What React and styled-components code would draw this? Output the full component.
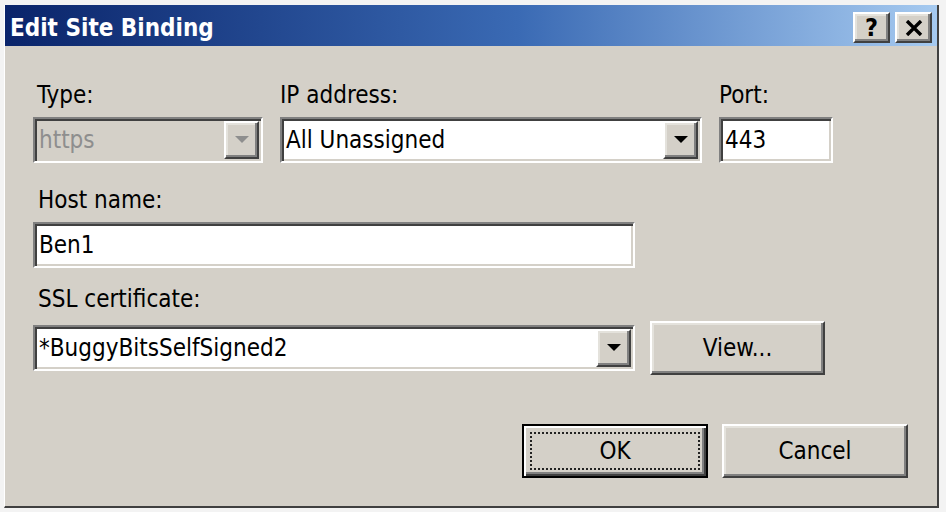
import React from 'react'
import styled, { createGlobalStyle, css } from 'styled-components'

const GlobalStyle = createGlobalStyle`
  html, body {
    margin: 0;
    background: #f3f3f3;
  }
  body {
    font-family: "DejaVu Sans Condensed", "Liberation Sans", sans-serif;
  }
  * {
    box-sizing: border-box;
  }
`

const raised = css`
  border: 2px solid;
  border-color: #ffffff #404040 #404040 #ffffff;
  box-shadow: inset -2px -2px 0 #808080, inset 2px 2px 0 #e4e2dc;
  background: #d4d0c8;
`

const sunken = css`
  border: 2px solid;
  border-color: #808080 #ffffff #ffffff #808080;
  box-shadow: inset 2px 2px 0 #404040, inset -2px -2px 0 #d4d0c8;
  padding: 2px;
`

const Page = styled.div`
  width: 946px;
  height: 512px;
  padding: 5px 0 0 4px;
  overflow: hidden;
`

const Window = styled.div`
  width: 935px;
  height: 503px;
  display: flex;
  flex-direction: column;
  background: #d4d0c8;
  border-style: solid;
  border-width: 0 2px 2px 1px;
  border-color: #ffffff #404040 #404040 #ffffff;
`

const TitleBar = styled.div`
  height: 41px;
  flex: none;
  display: flex;
  align-items: center;
  justify-content: space-between;
  padding: 4px 5px 0 5px;
  background: linear-gradient(to right, #0a246a 0%, #3a6ab4 55%, #a6caf0 100%);
`

const Title = styled.span`
  color: #ffffff;
  font-weight: bold;
  font-size: 24px;
  line-height: 28px;
`

const CaptionButtons = styled.div`
  display: flex;
  gap: 5px;
`

const CaptionButton = styled.div`
  ${raised};
  width: 37px;
  height: 31px;
  display: flex;
  align-items: center;
  justify-content: center;
  font-weight: bold;
  font-size: 25px;
  line-height: 24px;
  color: #000;
`

const Body = styled.div`
  flex: 1;
  display: flex;
  flex-direction: column;
  padding: 35px 29px 0 28px;
`

const TopRow = styled.div`
  display: grid;
  grid-template-columns: 230px 422px 114px;
  column-gap: 17px;
`

const Group = styled.div`
  display: flex;
  flex-direction: column;
  margin-top: ${({ $top }) => $top || 0}px;
`

const Label = styled.div`
  font-size: 24px;
  line-height: 28px;
  color: #000;
  margin-bottom: 8px;
  padding-left: ${({ $indent }) => ($indent === undefined ? 4 : $indent)}px;
`

const Field = styled.div`
  ${sunken};
  width: ${({ $width }) => ($width ? `${$width}px` : '100%')};
  height: 46px;
  display: flex;
  align-items: stretch;
  background: ${({ $disabled }) => ($disabled ? '#d4d0c8' : '#ffffff')};
`

const Value = styled.span`
  flex: 1;
  font-size: 24px;
  line-height: 38px;
  padding-left: 2px;
  color: ${({ $disabled }) => ($disabled ? '#8e8e8e' : '#000')};
  white-space: nowrap;
  overflow: hidden;
`

const DropButton = styled.div`
  ${raised};
  width: 35px;
  display: flex;
  align-items: center;
  justify-content: center;
`

const CertRow = styled.div`
  display: flex;
  align-items: center;
  gap: 15px;
`

const Button = styled.div`
  ${raised};
  width: ${({ $width }) => $width}px;
  height: 54px;
  display: flex;
  align-items: center;
  justify-content: center;
  font-size: 24px;
  color: #000;
  ${({ $default }) =>
    $default &&
    css`
      border: 2px solid #000;
      box-shadow: inset 2px 2px 0 #ffffff, inset -2px -2px 0 #404040,
        inset -4px -4px 0 #808080;
      padding: 6px;
    `}
`

const FocusRing = styled.span`
  flex: 1;
  align-self: stretch;
  display: flex;
  align-items: center;
  justify-content: center;
  border: 2px dotted #222;
`

const ButtonRow = styled.div`
  display: flex;
  justify-content: flex-end;
  gap: 14px;
  margin-top: 49px;
`

const Arrow = ({ disabled }) => (
  <svg width="14" height="8" viewBox="0 0 14 8">
    <polygon points="0,0 14,0 7,7" fill={disabled ? '#8e8e8e' : '#000'} />
  </svg>
)

const Combo = ({ width, value, disabled }) => (
  <Field $width={width} $disabled={disabled}>
    <Value $disabled={disabled}>{value}</Value>
    <DropButton>
      <Arrow disabled={disabled} />
    </DropButton>
  </Field>
)

const CloseGlyph = () => (
  <svg width="18" height="16" viewBox="0 0 18 16">
    <path d="M2 1 L16 15 M16 1 L2 15" stroke="#000" strokeWidth="3.4" />
  </svg>
)

export default function App() {
  return (
    <>
      <GlobalStyle />
      <Page>
        <Window>
          <TitleBar>
            <Title>Edit Site Binding</Title>
            <CaptionButtons>
              <CaptionButton>?</CaptionButton>
              <CaptionButton>
                <CloseGlyph />
              </CaptionButton>
            </CaptionButtons>
          </TitleBar>
          <Body>
            <TopRow>
              <Group>
                <Label>Type:</Label>
                <Combo value="https" disabled />
              </Group>
              <Group>
                <Label $indent={0}>IP address:</Label>
                <Combo value="All Unassigned" />
              </Group>
              <Group>
                <Label $indent={0}>Port:</Label>
                <Field>
                  <Value>443</Value>
                </Field>
              </Group>
            </TopRow>
            <Group $top={23}>
              <Label $indent={5}>Host name:</Label>
              <Field $width={602}>
                <Value>Ben1</Value>
              </Field>
            </Group>
            <Group $top={17}>
              <Label $indent={5}>SSL certificate:</Label>
              <CertRow>
                <Combo width={602} value="*BuggyBitsSelfSigned2" />
                <Button $width={175}>View...</Button>
              </CertRow>
            </Group>
            <ButtonRow>
              <Button $width={186} $default>
                <FocusRing>OK</FocusRing>
              </Button>
              <Button $width={186}>Cancel</Button>
            </ButtonRow>
          </Body>
        </Window>
      </Page>
    </>
  )
}
